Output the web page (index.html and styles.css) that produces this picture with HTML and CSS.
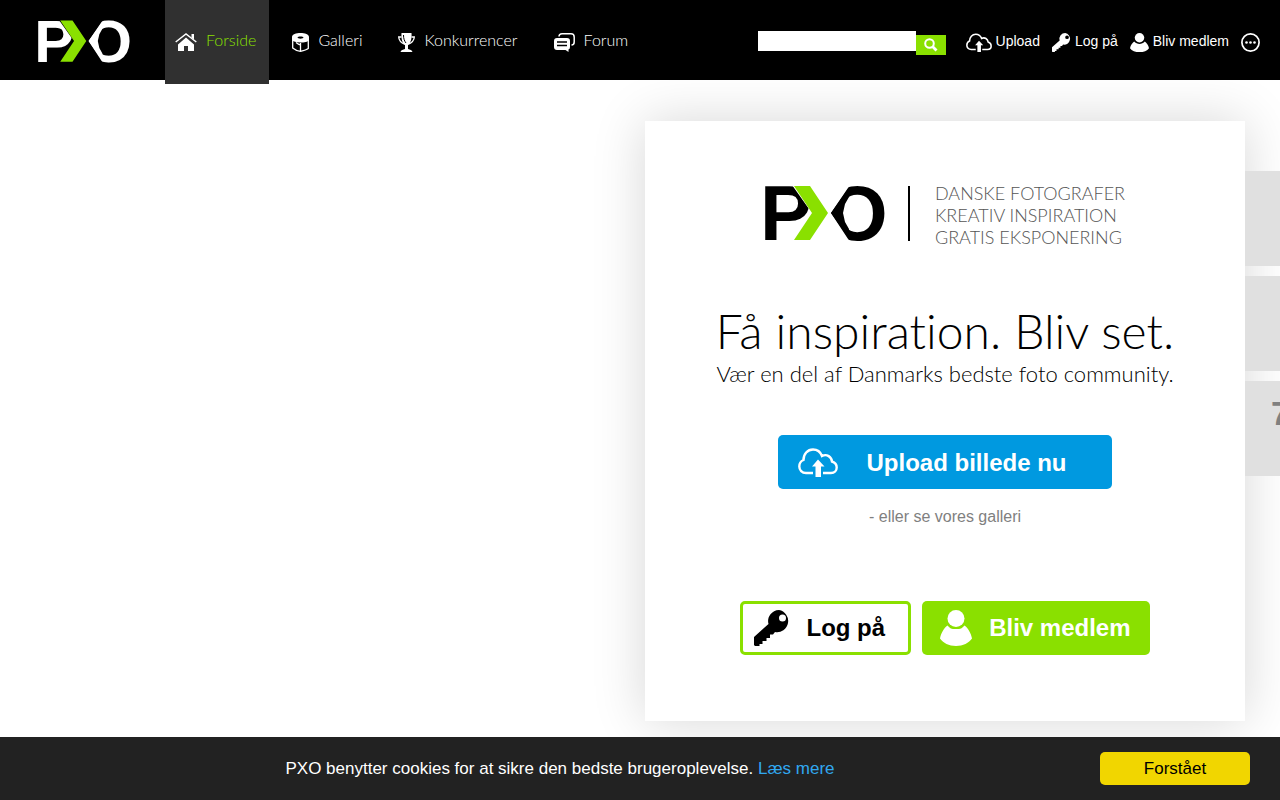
FILE: index.html
```html
<!DOCTYPE html>
<html lang="da">
<head>
    <meta charset="UTF-8">
    <meta name="viewport" content="width=device-width, initial-scale=1.0">
    <title>PXO - Få inspiration. Bliv set.</title>
    <link rel="stylesheet" href="styles.css">
</head>
<body>
    <!-- Shared icons -->
    <svg class="sprite" aria-hidden="true">
        <symbol id="logo" viewBox="0 0 120 55">
            <text class="logo-letter" x="-5" y="54">P</text>
            <polygon class="logo-cut" points="27,-1 44,23 44,40 62,40 62,-1"/>
            <text class="logo-letter" x="62" y="54">O</text>
            <polygon class="logo-cut" points="58,-1 85,-1 66,27 85,56 58,56"/>
            <polygon points="66,27 83,3 84,11 80,18 78,27 80,36 84,43 83,51"/>
            <polygon class="logo-arrow" points="29,0 45,0 63,27 45,54 29,54 47,27"/>
        </symbol>
        <symbol id="cloud" viewBox="0 0 40 30">
            <path d="M15 25H8C4 25 1.300 22 1.300 18.500C1.300 15.500 3 13 5.500 12C5.500 6 9.500 1.500 15 1.500C19.500 1.500 22.500 4 24 8C29 5.500 33.500 9 34 13.500C37 14.500 38.700 17 38.700 19.500C38.700 22.500 36.500 25 33 25H25" fill="none" stroke="currentColor" stroke-width="2.400"/>
            <path d="M20 11.500L26.500 18.500H23V29H17.500V18.500H14Z"/>
        </symbol>
        <symbol id="key" viewBox="0 0 36 36">
            <path fill-rule="evenodd" d="M25 0A11 11 0 1 1 21 22L19 24.500H16V28H12.500V31H8.500V34H5.500V36H1L0 35V27L14.500 14A11 11 0 0 1 25 0ZM28.500 4.500A3.500 3.500 0 1 0 28.500 11.500A3.500 3.500 0 1 0 28.500 4.500Z"/>
        </symbol>
        <symbol id="user" viewBox="0 0 32 36">
            <circle cx="16" cy="8.500" r="8.500"/>
            <path d="M7.500 15.500C9.500 18 11.500 19 13 19H19C20.500 19 22.500 18 24.500 15.500C28 18 31 23 32 28.500C29 33 23 36 16 36S3 33 0 28.500C1 23 4 18 7.500 15.500Z"/>
        </symbol>
    </svg>

    <header class="topbar">
        <a class="brand" href="#" aria-label="PXO"><svg><use href="#logo"/></svg></a>

        <nav class="menu">
            <a class="menu-item active" href="#">
                <svg width="22" height="19" viewBox="0 0 22 19"><path d="M11 4.500L19 11.500V18H13V13H9V18H3V11.500Z"/><path d="M.7 9L11 1L21.300 9" fill="none" stroke="currentColor" stroke-width="1.500"/><path d="M16.500 1H19V6.500L16.500 4.500Z"/></svg>
                <span>Forside</span>
            </a>
            <a class="menu-item" href="#">
                <svg width="17" height="19" viewBox="0 0 17 19"><path fill-rule="evenodd" d="M0 4C0 -1.300 17 -1.300 17 4V7C16 9 12 9.500 8.500 9.500C4 9.500 1 8.500 0 7ZM5.500 4.500C5.500 6 11.500 6 11.500 4.500S5.500 3 5.500 4.500Z"/><path d="M.7 5V15C3 17 5.500 18 8.500 18.300V10M8.500 18.300C12 17.500 14.500 16.800 16.300 15.500V5M4 9.500Q6.500 11.500 8.500 12" fill="none" stroke="currentColor" stroke-width="1.300"/></svg>
                <span>Galleri</span>
            </a>
            <a class="menu-item" href="#">
                <svg width="17" height="19" viewBox="0 0 17 19"><path d="M3.500 0H13.500C14 6 12.500 10.500 10 11.500V16C12 16.500 14 17 14.500 19H2.500C3 17 5 16.500 7 16V11.500C4.500 10.500 3 6 3.500 0Z"/><path d="M3.500 4H.7C.8 7 2.500 9.500 7 11.500M13.500 4H16.300C16.200 7 14.500 9.500 10 11.500" fill="none" stroke="currentColor" stroke-width="1.300"/><path d="M5.500 2C5.500 6 6.500 8 8 10" fill="none" stroke="#000"/></svg>
                <span>Konkurrencer</span>
            </a>
            <a class="menu-item" href="#">
                <svg width="21" height="19" viewBox="0 0 21 19"><path d="M5 3.500Q5 .8 8 .8H17Q20.200 .8 20.200 4V9Q20.200 12 17.500 12" fill="none" stroke="currentColor" stroke-width="1.500"/><path d="M3 5H13Q16 5 16 8V14Q16 16 14.500 16.500V19L11.500 17H3Q0 17 0 14V8Q0 5 3 5Z"/><path d="M3 9H13M3 12.500H13" stroke="#000" stroke-width="1.300"/></svg>
                <span>Forum</span>
            </a>
        </nav>

        <form class="search" onsubmit="return false">
            <input type="search" aria-label="Søg">
            <button type="submit" aria-label="Søg">
                <svg width="14" height="14" viewBox="0 0 14 14"><circle cx="5.500" cy="5.500" r="4.300" fill="none" stroke="currentColor" stroke-width="2"/><path d="M8.500 8.500L12.500 12.500" stroke="currentColor" stroke-width="2.800"/></svg>
            </button>
        </form>

        <div class="user-links">
            <a href="#"><svg width="26" height="20"><use href="#cloud"/></svg>Upload</a>
            <a href="#"><svg width="19" height="19"><use href="#key"/></svg>Log på</a>
            <a href="#"><svg width="19" height="19" viewBox="0 0 32 32"><circle cx="16" cy="8" r="8"/><path d="M7 14.500C9 17 13 18.500 16 18.500S23 17 25 14.500C28 17 31 21 32 25.500C29 30 23 32 16 32S3 30 0 25.500C1 21 4 17 7 14.500Z"/></svg>Bliv medlem</a>
            <a href="#" aria-label="Mere"><svg width="19" height="19" viewBox="0 0 19 19"><circle cx="9.500" cy="9.500" r="8.600" fill="none" stroke="currentColor" stroke-width="1.700"/><circle cx="5.500" cy="9.500" r="1.300"/><circle cx="9.500" cy="9.500" r="1.300"/><circle cx="13.500" cy="9.500" r="1.300"/></svg></a>
        </div>
    </header>

    <main class="content">
        <section class="welcome">
            <div class="intro">
                <svg class="intro-logo" role="img" aria-label="PXO"><use href="#logo"/></svg>
                <p class="tagline">DANSKE FOTOGRAFER<br>KREATIV INSPIRATION<br>GRATIS EKSPONERING</p>
            </div>
            <h1>Få inspiration. Bliv set.</h1>
            <h2>Vær en del af Danmarks bedste foto community.</h2>
            <a class="btn btn-upload" href="#"><svg width="40" height="30"><use href="#cloud"/></svg>Upload billede nu</a>
            <a class="gallery-link" href="#">- eller se vores galleri</a>
            <div class="actions">
                <a class="btn btn-login" href="#"><svg width="36" height="36"><use href="#key"/></svg>Log på</a>
                <a class="btn btn-join" href="#"><svg width="32" height="36"><use href="#user"/></svg>Bliv medlem</a>
            </div>
        </section>

        <aside class="tiles">
            <div class="tile"></div>
            <div class="tile"></div>
            <div class="tile">7</div>
        </aside>
    </main>

    <div class="cookie-bar">
        <p>PXO benytter cookies for at sikre den bedste brugeroplevelse. <a href="#">Læs mere</a></p>
        <button type="button">Forstået</button>
    </div>
</body>
</html>
```
FILE: styles.css
```css
* {
    margin: 0;
    padding: 0;
    box-sizing: border-box;
}

body {
    font-family: "Liberation Sans", Arial, sans-serif;
    background: #fff;
    color: #000;
    overflow-x: hidden;
}

a {
    color: inherit;
    text-decoration: none;
}

svg {
    fill: currentColor;
    flex-shrink: 0;
}

.sprite {
    position: absolute;
    width: 0;
    height: 0;
}

.logo-letter {
    font-family: "Liberation Sans", Arial, sans-serif;
    font-size: 78px;
    font-weight: bold;
}

.logo-cut {
    fill: var(--logo-bg);
}

.logo-arrow {
    fill: #8ae000;
}

/* Top bar */
.topbar {
    --logo-bg: #000;
    display: flex;
    align-items: flex-start;
    height: 80px;
    padding: 0 20px 0 38px;
    background: #000;
    color: #fff;
}

.brand {
    margin-right: 35px;
    padding-top: 20px;
}

.brand svg {
    display: block;
    width: 92px;
    height: 43px;
}

.menu {
    display: flex;
    gap: 13px;
    font-family: Lato, sans-serif;
    font-size: 16px;
    font-weight: 300;
}

.menu-item {
    display: flex;
    align-items: center;
    gap: 9px;
    height: 84px;
    padding: 0 13px 0 10px;
}

.menu-item span {
    padding-bottom: 5px;
}

.menu-item.active {
    background: #303030;
    color: #8ae000;
}

.menu-item.active svg {
    color: #fff;
}

.search {
    display: flex;
    margin: 31px 20px 0 auto;
}

.search input {
    width: 158px;
    height: 20px;
    padding: 0 4px;
    border: none;
    border-radius: 0;
    appearance: none;
}

.search button {
    display: flex;
    align-items: center;
    justify-content: center;
    width: 30px;
    height: 20px;
    margin-top: 4px;
    border: none;
    background: #8ae000;
    color: #fff;
}

.user-links {
    display: flex;
    gap: 12px;
    padding-top: 32px;
    font-size: 14px;
}

.user-links a {
    display: flex;
    gap: 4px;
    height: 20px;
    line-height: 18px;
}

.user-links svg {
    margin-top: 1px;
}

/* Welcome panel */
.content {
    display: flex;
    justify-content: flex-end;
    align-items: flex-start;
    padding: 41px 0 79px;
}

.welcome {
    --logo-bg: #fff;
    display: flex;
    flex-direction: column;
    align-items: center;
    width: 600px;
    min-height: 600px;
    padding: 61px 40px;
    background: #fff;
    box-shadow: 0 0 50px rgba(0, 0, 0, 0.16);
}

.intro {
    display: flex;
    align-items: flex-start;
    margin-bottom: 53px;
}

.intro-logo {
    width: 120px;
    height: 55px;
    margin-top: 4px;
}

.tagline {
    position: relative;
    padding-left: 50px;
    font-family: Lato, sans-serif;
    font-size: 18px;
    font-weight: 300;
    line-height: 22px;
    color: #555;
}

.tagline::before {
    content: "";
    position: absolute;
    left: 23px;
    top: 4px;
    width: 2px;
    height: 55px;
    background: #000;
}

h1 {
    font-family: Lato, sans-serif;
    font-size: 48px;
    font-weight: 300;
    font-variant-ligatures: none;
    line-height: 60px;
}

h2 {
    margin-bottom: 48px;
    font-family: Lato, sans-serif;
    font-size: 22px;
    font-weight: 300;
    line-height: 26px;
}

.btn {
    display: flex;
    align-items: center;
    height: 54px;
    border-radius: 5px;
    font-size: 24px;
    font-weight: bold;
}

.btn-upload {
    gap: 28px;
    padding: 1px 45px 0 20px;
    background: #0099e0;
    color: #fff;
}

.gallery-link {
    margin-top: 18px;
    font-size: 16px;
    line-height: 20px;
    color: #808080;
}

.actions {
    display: flex;
    gap: 11px;
    margin-top: 74px;
}

.btn-login {
    gap: 16px;
    padding: 0 23px 0 11px;
    border: 3px solid #8ae000;
}

.btn-join {
    gap: 17px;
    padding: 0 19px 0 18px;
    background: #8ae000;
    color: #fff;
}

/* Tiles running off the right edge */
.tiles {
    display: flex;
    flex-direction: column;
    gap: 10px;
    width: 35px;
    padding-top: 50px;
    overflow: hidden;
}

.tile {
    width: 95px;
    height: 95px;
    padding: 13px 26px;
    background: #e0e0e0;
    color: #808080;
    font-size: 34px;
    font-weight: bold;
}

/* Cookie notice */
.cookie-bar {
    position: fixed;
    left: 0;
    right: 0;
    bottom: 0;
    display: flex;
    align-items: center;
    gap: 10px;
    padding: 15px 30px;
    background: #222;
    color: #fff;
    font-size: 17px;
}

.cookie-bar p {
    flex: 1;
    text-align: center;
}

.cookie-bar a {
    color: #31a8f0;
}

.cookie-bar button {
    width: 150px;
    height: 33px;
    border: none;
    border-radius: 5px;
    background: #f1d600;
    color: #000;
    font-family: inherit;
    font-size: 17px;
}
```
